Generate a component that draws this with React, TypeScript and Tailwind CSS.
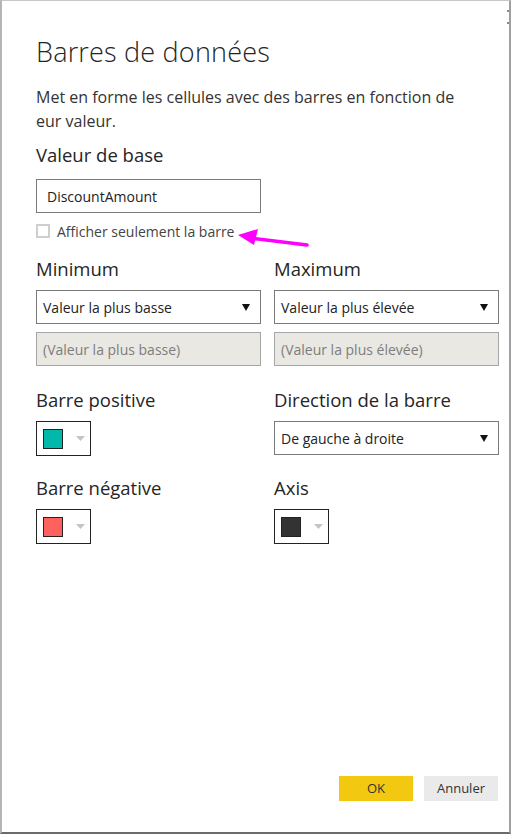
import React from "react";

const font = { fontFamily: "'Open Sans', 'Noto Sans', sans-serif" };

function Caret() {
  return (
    <svg width="10" height="10" viewBox="0 0 10 10" className="shrink-0">
      <path d="M1 2 L9 2 L5 9 Z" fill="#111" />
    </svg>
  );
}

function Select({ value }: { value: string }) {
  return (
    <div className="h-[34px] border border-[#7a7a7a] bg-white flex items-center justify-between pl-[6px] pr-[9px] text-[14px] text-[#222]">
      <span>{value}</span>
      <Caret />
    </div>
  );
}

function Disabled({ value }: { value: string }) {
  return (
    <div className="h-[34px] border border-[#a6a6a6] bg-[#eae8e2] flex items-center pl-[6px] text-[14px] text-[#7d7d7d]">
      {value}
    </div>
  );
}

function ColorPick({ color }: { color: string }) {
  return (
    <div className="w-[55px] h-[35px] border border-[#222] bg-white flex items-center pl-[6px] gap-[13px]">
      <div className="w-[20px] h-[20px] border border-[#222]" style={{ background: color }} />
      <svg width="9" height="6" viewBox="0 0 9 6">
        <path d="M0 0 L9 0 L4.5 5 Z" fill="#c4c4c4" />
      </svg>
    </div>
  );
}

function Label({ children }: { children: React.ReactNode }) {
  return <div className="text-[18.5px] leading-[24px] text-[#252525]">{children}</div>;
}

export default function App() {
  return (
    <div className="w-[511px] h-[834px] bg-white relative" style={font}>
      <div className="absolute inset-0 border-l-2 border-r-2 border-t border-b-2 border-l-[#b5b5b5] border-r-[#a0a0a0] border-t-[#c8c8c8] border-b-[#6b6b6b] pointer-events-none" />
      <div className="absolute right-[2px] top-[10px] w-[2px] h-[2px] bg-[#888]" />
      <div className="absolute right-[2px] top-[22px] w-[2px] h-[2px] bg-[#888]" />

      <div className="flex flex-col h-full pl-[36px] pr-[12px]">
        <h1 className="mt-[33px] text-[27px] leading-[38px] font-light text-[#252525] tracking-[0.2px]">
          Barres de données
        </h1>
        <p className="mt-[14px] text-[16px] leading-[24px] text-[#333] pr-[20px]">
          Met en forme les cellules avec des barres en fonction de eur valeur.
        </p>

        <div className="mt-[10px]">
          <Label>Valeur de base</Label>
        </div>
        <div className="mt-[12px] w-[225px] h-[34px] border border-[#7a7a7a] flex items-center pl-[10px] text-[14px] text-[#222]">
          DiscountAmount
        </div>
        <div className="mt-[8px] h-[20px] flex items-center gap-[7px] relative">
          <div className="w-[14px] h-[14px] border-2 border-[#cfcfcf] bg-white" />
          <span className="text-[14px] text-[#444]">Afficher seulement la barre</span>
          <svg
            className="absolute left-[200px] top-[8px]"
            width="75"
            height="26"
            viewBox="0 0 75 26"
          >
            <path d="M71 16 L14 9" stroke="#ff00ff" strokeWidth="3.5" strokeLinecap="round" />
            <path d="M2 6 L22 0 L18 16 Z" fill="#ff00ff" />
          </svg>
        </div>

        <div className="mt-[16px] grid grid-cols-2 gap-x-[13px] w-[463px]">
          <div className="flex flex-col">
            <Label>Minimum</Label>
            <div className="mt-[9px]"><Select value="Valeur la plus basse" /></div>
            <div className="mt-[8px]"><Disabled value="(Valeur la plus basse)" /></div>
          </div>
          <div className="flex flex-col">
            <Label>Maximum</Label>
            <div className="mt-[9px]"><Select value="Valeur la plus élevée" /></div>
            <div className="mt-[8px]"><Disabled value="(Valeur la plus élevée)" /></div>
          </div>

          <div className="flex flex-col mt-[22px]">
            <Label>Barre positive</Label>
            <div className="mt-[9px]"><ColorPick color="#01b8aa" /></div>
          </div>
          <div className="flex flex-col mt-[22px]">
            <Label>Direction de la barre</Label>
            <div className="mt-[9px]"><Select value="De gauche à droite" /></div>
          </div>

          <div className="flex flex-col mt-[20px]">
            <Label>Barre négative</Label>
            <div className="mt-[9px]"><ColorPick color="#fd625e" /></div>
          </div>
          <div className="flex flex-col mt-[20px]">
            <Label>Axis</Label>
            <div className="mt-[9px]"><ColorPick color="#333333" /></div>
          </div>
        </div>

        <div className="mt-auto mb-[33px] flex justify-end gap-[11px] pr-[1px]">
          <button className="w-[74px] h-[25px] bg-[#f2c811] text-[13px] text-[#333]">OK</button>
          <button className="w-[74px] h-[25px] bg-[#eaeaea] text-[13px] text-[#333]">Annuler</button>
        </div>
      </div>
    </div>
  );
}
